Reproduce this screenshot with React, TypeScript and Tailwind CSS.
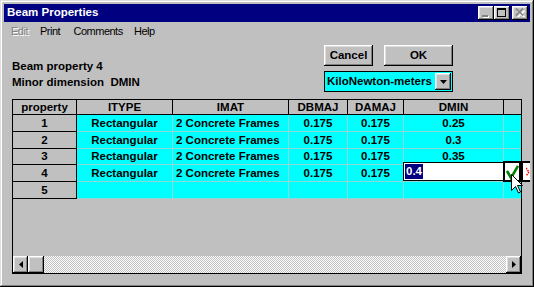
import React from "react";

const raised =
  "shadow-[inset_-1px_-1px_#000,inset_1px_1px_#fff,inset_-2px_-2px_#808080,inset_2px_2px_#dfdfdf]";

const cols = [
  { w: "w-[64px]", align: "justify-center" },
  { w: "w-[96px]", align: "justify-center" },
  { w: "w-[116px]", align: "justify-start pl-[3px]" },
  { w: "w-[59px]", align: "justify-center" },
  { w: "w-[56px]", align: "justify-center" },
  { w: "w-[100px]", align: "justify-center" },
  { w: "w-[17px]", align: "justify-center" },
];

const headers = ["property", "ITYPE", "IMAT", "DBMAJ", "DAMAJ", "DMIN", ""];

const rows = [
  ["1", "Rectangular", "2 Concrete Frames", "0.175", "0.175", "0.25", ""],
  ["2", "Rectangular", "2 Concrete Frames", "0.175", "0.175", "0.3", ""],
  ["3", "Rectangular", "2 Concrete Frames", "0.175", "0.175", "0.35", ""],
  ["4", "Rectangular", "2 Concrete Frames", "0.175", "0.175", "", ""],
  ["5", "", "", "", "", "", ""],
];
const rowH = ["h-[17px]", "h-[17px]", "h-[16px]", "h-[17px]", "h-[17px]"];

function TitleButtons() {
  return (
    <div className="ml-auto flex items-center">
      <div className={`w-[16px] h-[14px] bg-[#c0c0c0] ${raised} relative`}>
        <div className="absolute left-[4px] top-[9px] w-[6px] h-[2px] bg-[#808080] shadow-[1px_1px_0_#fff]" />
      </div>
      <div className={`w-[16px] h-[14px] bg-[#c0c0c0] ${raised} relative`}>
        <div className="absolute left-[3px] top-[2px] w-[9px] h-[9px] border border-black border-t-2" />
      </div>
      <div className={`ml-[2px] w-[16px] h-[14px] bg-[#c0c0c0] ${raised} relative`}>
        <svg className="absolute left-[3px] top-[2px]" width="10" height="9" viewBox="0 0 10 9">
          <path d="M1.5 1.5 L8.5 8.5 M8.5 1.5 L1.5 8.5" stroke="#fff" strokeWidth="1.6" transform="translate(1,1)" />
          <path d="M1 0.5 L8 7.5 M8 0.5 L1 7.5" stroke="#808080" strokeWidth="1.6" />
        </svg>
      </div>
    </div>
  );
}

function Grid() {
  return (
    <div className="relative w-[510px] h-[175px] border border-black bg-[#c0c0c0] flex flex-col">
      {/* header */}
      <div className="flex h-[15px] border-b border-black shrink-0">
        {cols.map((c, i) => (
          <div
            key={i}
            className={`${c.w} h-full flex items-center justify-center pt-[1px] font-bold text-[11.5px] leading-none ${
              i < cols.length - 1 ? "border-r border-black" : ""
            }`}
          >
            {headers[i]}
          </div>
        ))}
      </div>
      {rows.map((r, ri) => (
        <div key={ri} className={`flex ${rowH[ri]} shrink-0`}>
          {cols.map((c, i) =>
            i === 0 ? (
              <div
                key={i}
                className={`${c.w} h-full flex items-center justify-center pt-[1px] font-bold text-[11.5px] leading-none border-r border-b border-black bg-[#c0c0c0]`}
              >
                {r[i]}
              </div>
            ) : (
              <div
                key={i}
                className={`${c.w} h-full flex items-center ${c.align} pt-[1px] font-bold text-[11.5px] leading-none bg-[#00ffff] border-b border-[#8fd8d8] ${
                  i < cols.length - 1 ? "border-r" : ""
                }`}
              >
                {r[i]}
              </div>
            )
          )}
        </div>
      ))}
      <div className="flex-1" />
      {/* scrollbar */}
      <div className="flex h-[17px] shrink-0">
        <div className={`w-[15px] h-full bg-[#c0c0c0] ${raised} flex items-center justify-center`}>
          <svg width="4" height="7" viewBox="0 0 4 7">
            <path d="M4 0 L0 3.5 L4 7 Z" fill="#000" />
          </svg>
        </div>
        <div className={`w-[16px] h-full bg-[#c0c0c0] ${raised}`} />
        <div className="flex-1 h-full bg-[repeating-conic-gradient(#ffffff_0_25%,#c0c0c0_0_50%)] bg-[length:2px_2px]" />
        <div className={`w-[15px] h-full bg-[#c0c0c0] ${raised} flex items-center justify-center`}>
          <svg width="4" height="7" viewBox="0 0 4 7">
            <path d="M0 0 L4 3.5 L0 7 Z" fill="#000" />
          </svg>
        </div>
      </div>

      {/* edit box overlay */}
      <div className="absolute left-[390px] top-[62px] w-[102px] h-[19px] bg-white border border-black flex items-center pl-[1px]">
        <span className="bg-[#000080] text-white font-bold text-[11.5px] leading-[15px] h-[15px] px-[1px]">0.4</span>
      </div>
      <div className="absolute left-[490px] top-[61px] w-[18px] h-[21px] bg-white border-2 border-black">
        <svg className="absolute left-0 top-0" width="14" height="17" viewBox="0 0 14 17">
          <path d="M2 8 L6 15 L13 3" stroke="#008000" strokeWidth="2.6" fill="none" />
        </svg>
      </div>
      <div className="absolute left-[508px] top-[61px] w-[9px] h-[21px] bg-white border-l-2 border-y-2 border-black overflow-hidden">
        <svg className="absolute left-[3px] top-[4px]" width="4" height="10" viewBox="0 0 4 10">
          <path d="M0 1 L3 5 L0 9" stroke="#ff0000" strokeWidth="1.5" fill="none" strokeDasharray="1.5 1" />
        </svg>
      </div>
      {/* cursor */}
      <svg className="absolute left-[498px] top-[74px]" width="12" height="20" viewBox="0 0 12 20">
        <path
          d="M0.5 0.5 L0.5 16.5 L4.5 12.5 L7.5 19 L9.5 18 L6.5 11.5 L11.5 11.5 Z"
          fill="#fff"
          stroke="#000"
          strokeWidth="1"
        />
      </svg>
    </div>
  );
}

export default function App() {
  return (
    <div
      className={`w-[534px] h-[287px] bg-[#c0c0c0] p-[4px] flex flex-col relative overflow-hidden font-['Liberation_Sans',Arial,sans-serif] text-black shadow-[inset_-1px_-1px_#000,inset_1px_1px_#dfdfdf,inset_-2px_-2px_#808080,inset_2px_2px_#fff]`}
    >
      {/* title bar */}
      <div className="h-[18px] bg-[#000080] flex items-center pl-[3px] pr-[2px] shrink-0">
        <span className="text-white font-bold text-[11.5px] leading-none">Beam Properties</span>
        <TitleButtons />
      </div>
      {/* menu */}
      <div className="h-[19px] flex items-center pl-[7px] text-[11px] tracking-[-0.5px] shrink-0">
        <span className="w-[29px] text-[#808080] [text-shadow:1px_1px_0_#fff]">Edit</span>
        <span className="w-[33.5px]">Print</span>
        <span className="w-[60.5px]">Comments</span>
        <span>Help</span>
      </div>
      {/* top section */}
      <div className="h-[58px] flex pl-[8px] shrink-0">
        <div className="w-[312px] pt-[17px] font-bold text-[11.5px] leading-[16px]">
          <div>Beam property 4</div>
          <div className="whitespace-pre">Minor dimension  DMIN</div>
        </div>
        <div className="pt-[4px] flex flex-col">
          <div className="flex">
            <button className={`w-[49px] h-[21px] bg-[#c0c0c0] ${raised} font-bold text-[11.5px] leading-none`}>
              Cancel
            </button>
            <button className={`ml-[11px] w-[69px] h-[21px] bg-[#c0c0c0] ${raised} font-bold text-[11.5px] leading-none`}>
              OK
            </button>
          </div>
          <div className="mt-[5px] w-[129px] h-[21px] border border-black bg-[#00ffff] flex items-center pl-[2px]">
            <span className="font-bold text-[11.5px] leading-none">KiloNewton-meters</span>
            <div className={`ml-auto mr-[1px] w-[16px] h-[17px] bg-[#c0c0c0] ${raised} flex items-center justify-center`}>
              <svg width="7" height="4" viewBox="0 0 7 4">
                <path d="M0 0 L7 0 L3.5 4 Z" fill="#000" />
              </svg>
            </div>
          </div>
        </div>
      </div>
      {/* grid */}
      <div className="pl-[8px]">
        <Grid />
      </div>
    </div>
  );
}
